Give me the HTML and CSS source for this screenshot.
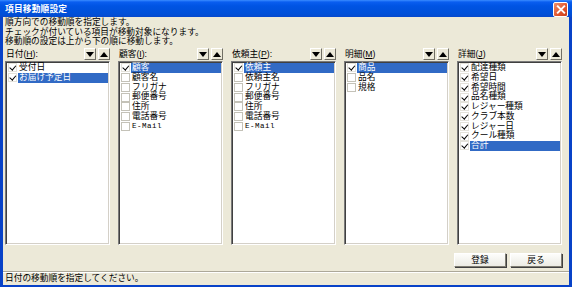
FILE: index.html
```html
<!DOCTYPE html>
<html lang="ja">
<head>
    <meta charset="UTF-8">
    <title>項目移動順設定</title>
    <link rel="stylesheet" href="styles.css">
</head>
<body>
    <div class="window">
        <div class="titlebar">
            <span class="title">項目移動順設定</span>
            <span class="close-btn"><span class="x"></span></span>
        </div>
        <div class="client">
            <div class="info">
                <div>順方向での移動順を指定します。</div>
                <div>チェックが付いている項目が移動対象になります。</div>
                <div>移動順の設定は上から下の順に移動します。</div>
            </div>
            <div class="panels">
                <div class="panel">
                    <div class="panel-head">
                        <span class="label">日付(<u>H</u>):</span>
                        <span class="arrows"><span class="arrow down"></span><span class="arrow up"></span></span>
                    </div>
                    <ul class="list">
                        <li class="item checked"><span class="box"></span><span class="txt">受付日</span></li>
                        <li class="item checked sel"><span class="box"></span><span class="txt">お届け予定日</span></li>
                    </ul>
                </div>
                <div class="panel">
                    <div class="panel-head">
                        <span class="label">顧客(<u>I</u>):</span>
                        <span class="arrows"><span class="arrow down"></span><span class="arrow up"></span></span>
                    </div>
                    <ul class="list">
                        <li class="item checked sel"><span class="box"></span><span class="txt">顧客</span></li>
                        <li class="item"><span class="box"></span><span class="txt">顧客名</span></li>
                        <li class="item"><span class="box"></span><span class="txt">フリガナ</span></li>
                        <li class="item"><span class="box"></span><span class="txt">郵便番号</span></li>
                        <li class="item"><span class="box"></span><span class="txt">住所</span></li>
                        <li class="item"><span class="box"></span><span class="txt">電話番号</span></li>
                        <li class="item"><span class="box"></span><span class="txt mono">E-Mail</span></li>
                    </ul>
                </div>
                <div class="panel">
                    <div class="panel-head">
                        <span class="label">依頼主(<u>P</u>):</span>
                        <span class="arrows"><span class="arrow down"></span><span class="arrow up"></span></span>
                    </div>
                    <ul class="list">
                        <li class="item checked sel"><span class="box"></span><span class="txt">依頼主</span></li>
                        <li class="item"><span class="box"></span><span class="txt">依頼主名</span></li>
                        <li class="item"><span class="box"></span><span class="txt">フリガナ</span></li>
                        <li class="item"><span class="box"></span><span class="txt">郵便番号</span></li>
                        <li class="item"><span class="box"></span><span class="txt">住所</span></li>
                        <li class="item"><span class="box"></span><span class="txt">電話番号</span></li>
                        <li class="item"><span class="box"></span><span class="txt mono">E-Mail</span></li>
                    </ul>
                </div>
                <div class="panel">
                    <div class="panel-head">
                        <span class="label">明細(<u>M</u>)</span>
                        <span class="arrows"><span class="arrow down"></span><span class="arrow up"></span></span>
                    </div>
                    <ul class="list">
                        <li class="item checked sel"><span class="box"></span><span class="txt">商品</span></li>
                        <li class="item"><span class="box"></span><span class="txt">品名</span></li>
                        <li class="item"><span class="box"></span><span class="txt">規格</span></li>
                    </ul>
                </div>
                <div class="panel">
                    <div class="panel-head">
                        <span class="label">詳細(<u>J</u>)</span>
                        <span class="arrows"><span class="arrow down"></span><span class="arrow up"></span></span>
                    </div>
                    <ul class="list">
                        <li class="item checked"><span class="box"></span><span class="txt">配達種類</span></li>
                        <li class="item checked"><span class="box"></span><span class="txt">希望日</span></li>
                        <li class="item checked"><span class="box"></span><span class="txt">希望時間</span></li>
                        <li class="item checked"><span class="box"></span><span class="txt">品名種類</span></li>
                        <li class="item checked"><span class="box"></span><span class="txt">レジャー種類</span></li>
                        <li class="item checked"><span class="box"></span><span class="txt">クラブ本数</span></li>
                        <li class="item checked"><span class="box"></span><span class="txt">レジャー日</span></li>
                        <li class="item checked"><span class="box"></span><span class="txt">クール種類</span></li>
                        <li class="item checked sel"><span class="box"></span><span class="txt">合計</span></li>
                    </ul>
                </div>
            </div>
            <div class="buttons">
                <button class="btn">登録</button>
                <button class="btn">戻る</button>
            </div>
            <div class="statusbar">日付の移動順を指定してください。</div>
        </div>
    </div>
</body>
</html>
```

FILE: styles.css
```css
body {
    margin: 0;
    font-family: "Liberation Sans", "Noto Sans CJK JP", sans-serif;
    font-size: 8.7px;
    color: #000;
    background: #ece9d8;
}

.window {
    width: 572px;
    height: 287px;
    box-sizing: border-box;
    display: flex;
    flex-direction: column;
    background: #0842c8;
    padding: 0 3px 2px 3px;
}

.titlebar {
    height: 18px;
    margin: 0 -3px;
    padding: 0 4px 0 5px;
    display: flex;
    align-items: center;
    justify-content: space-between;
    background: linear-gradient(#3a8cff 0, #0a5ef0 2px, #0054e3 6px, #0050d8 14px, #0845c8 18px);
}

.title {
    color: #fff;
    font-weight: bold;
    font-size: 8.7px;
    letter-spacing: 0.2px;
}

.close-btn {
    width: 13px;
    height: 13px;
    border: 1px solid #fff;
    border-radius: 2px;
    background: linear-gradient(135deg, #f0906c, #e0542c 60%, #c8401c);
    display: flex;
    align-items: center;
    justify-content: center;
    margin-top: 1px;
}

.close-btn .x {
    position: relative;
    width: 9px;
    height: 9px;
}

.close-btn .x::before,
.close-btn .x::after {
    content: "";
    position: absolute;
    left: 3.5px;
    top: -1px;
    width: 2px;
    height: 11px;
    background: #fff;
    transform: rotate(45deg);
}

.close-btn .x::after {
    transform: rotate(-45deg);
}

.client {
    flex: 1;
    display: flex;
    flex-direction: column;
    background: #ece9d8;
}

.info {
    padding: 1px 0 0 2px;
    line-height: 9.5px;
    height: 29px;
}

.panels {
    display: flex;
    gap: 8px;
    padding-left: 2px;
}

.panel {
    width: 105px;
    display: flex;
    flex-direction: column;
}

.panel-head {
    height: 14px;
    display: flex;
    justify-content: space-between;
    align-items: flex-end;
    padding-bottom: 1px;
    box-sizing: border-box;
}

.label {
    padding-left: 1px;
    padding-bottom: 1px;
    line-height: 10px;
}

.arrows {
    display: flex;
    gap: 2px;
}

.arrow {
    width: 12px;
    height: 12px;
    box-sizing: border-box;
    border: 1px solid;
    border-color: #fff #716f64 #716f64 #fff;
    background: #ece9d8;
    display: flex;
    align-items: center;
    justify-content: center;
}

.arrow::after {
    content: "";
    border-left: 4px solid transparent;
    border-right: 4px solid transparent;
}

.arrow.down::after {
    border-top: 5px solid #000;
}

.arrow.up::after {
    border-bottom: 5px solid #000;
}

.list {
    list-style: none;
    margin: 0;
    padding: 1px 0 0 0;
    height: 184px;
    box-sizing: border-box;
    background: #fff;
    border: 1px solid;
    border-color: #7a7a7a #ffffff #ffffff #7a7a7a;
    box-shadow: inset 1px 1px 0 #404040, inset -1px -1px 0 #d4d0c8;
}

.item {
    height: 9.75px;
    display: flex;
    align-items: center;
    padding-left: 2px;
    padding-right: 1px;
    line-height: 9.75px;
}

.box {
    width: 7px;
    height: 7px;
    border: 1px solid #c4c2b8;
    background: #fff;
    position: relative;
    flex: none;
}

.item.checked .box {
    border-color: #e4e2da;
}

.item.checked .box::after {
    content: "";
    position: absolute;
    left: 1.5px;
    top: 0;
    width: 2.5px;
    height: 4.5px;
    border-right: 1.5px solid #000;
    border-bottom: 1.5px solid #000;
    transform: rotate(40deg);
}

.txt {
    flex: 1;
    padding-left: 1px;
    margin-left: 1px;
    white-space: nowrap;
    height: 9.75px;
}

.mono {
    font-family: "Liberation Mono", monospace;
    font-size: 7.5px;
    letter-spacing: 0.5px;
}

.item.sel .txt {
    background: #316ac5;
    color: #fff;
}

.buttons {
    display: flex;
    justify-content: flex-end;
    gap: 4px;
    padding: 8px 7px 0 0;
    height: 18px;
}

.btn {
    width: 52px;
    height: 14px;
    padding: 0;
    font-family: inherit;
    font-size: 8.7px;
    line-height: 12px;
    background: linear-gradient(#fdfdfb, #ecebe4);
    border: 1px solid;
    border-color: #fff #7f7d72 #7f7d72 #fff;
    box-shadow: 1px 1px 0 #404040;
    color: #000;
}

.statusbar {
    margin-top: auto;
    height: 13px;
    line-height: 12px;
    padding-left: 2px;
    border-top: 1px solid #aca899;
    box-shadow: inset 0 1px 0 #fff;
}
```
